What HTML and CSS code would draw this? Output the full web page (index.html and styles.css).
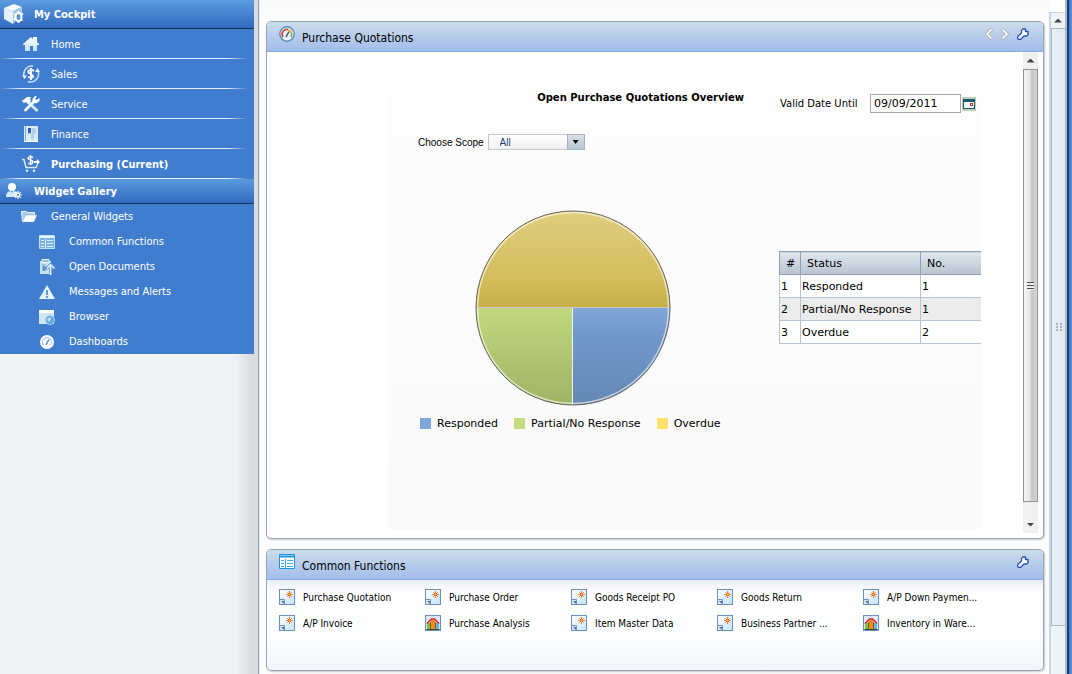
FILE: index.html
```html
<!DOCTYPE html>
<html lang="en">
<head>
    <meta charset="UTF-8">
    <meta name="viewport" content="width=device-width, initial-scale=1.0">
    <title>My Cockpit - Purchasing</title>
    <link rel="stylesheet" href="styles.css">
</head>
<body>
    <!-- shared icons -->
    <svg class="sprite" aria-hidden="true">
        <defs>
            <linearGradient id="pale" x1="0" y1="0" x2="0" y2="1">
                <stop offset="0" stop-color="#ffffff"/>
                <stop offset="1" stop-color="#bfe0f0"/>
            </linearGradient>
            <linearGradient id="paper" x1="0" y1="0" x2="1" y2="1">
                <stop offset="0" stop-color="#ffffff"/>
                <stop offset="1" stop-color="#c3e4f8"/>
            </linearGradient>
        </defs>
        <symbol id="new-doc" viewBox="0 0 16 16">
            <rect x="0.5" y="0.5" width="15" height="15" fill="url(#paper)" stroke="#6d8fbd"/>
            <path d="M0.5 10.5h5v5h-5z" fill="#dbe6f4" stroke="#6d8fbd"/>
            <path d="M2 12h3v3z" fill="#4f77ae"/>
            <path d="M10.500 2v7M7 5.500h7" stroke="#f08030"/>
            <path d="M8.500 3.500l4 4M12.500 3.500l-4 4" stroke="#e8541c"/>
            <circle cx="10.500" cy="5.500" r="1" fill="#ffc04a"/>
        </symbol>
        <symbol id="report" viewBox="0 0 16 16">
            <rect x="0.5" y="0.5" width="15" height="15" fill="#dcebf7" stroke="#6d8fbd"/>
            <path d="M2 8h4v6H2z" fill="#7cc142"/>
            <path d="M6 5h4v9H6z" fill="#f58a1f"/>
            <path d="M10 8h4v6h-4z" fill="#5bb8e8"/>
            <path d="M5.500 7v7M10.500 7v7" stroke="#8c5a14"/>
            <path d="M2 8.500L6.500 4h3L14 8.500" fill="none" stroke="#d8202c" stroke-width="1.500"/>
            <path d="M1.500 14.500h13" stroke="#2d4f2a"/>
        </symbol>
        <symbol id="wrench" viewBox="0 0 12 12">
            <path d="M4.500 2.500L6 1h2.500v2.500H11v3L9.500 8H7l-3.500 3.500H1.500L.7 10.500v-2L4.500 5z" fill="#fff" stroke="#2650b4" stroke-width="1.300" stroke-linejoin="round"/>
            <path d="M2.500 9.700l3-3" stroke="#c6d7f0"/>
        </symbol>
    </svg>

    <div class="app">
        <nav class="sidebar">
            <h2 class="nav-title">
                <svg width="22" height="22" viewBox="0 0 22 22">
                    <path d="M1 5l10-4 8 3-9 4z" fill="#fff"/>
                    <path d="M1 5l9 3v13l-9-5z" fill="#e2f1fa"/>
                    <path d="M10 8l9-4v8l-9 9z" fill="#a4cce9"/>
                    <path d="M15.500 8v2M15.500 17.500v2.500M11 16.500l2-1M18 12l2-1.500M11.500 11l1.500 1.500M18 16l1.500 1.500" stroke="#fff" stroke-width="2"/>
                    <ellipse cx="15.500" cy="14" rx="3" ry="4" fill="#5d9bd8" stroke="#fff" stroke-width="2"/>
                </svg>
                My Cockpit
            </h2>
            <ul class="nav-list">
                <li><a href="#home">
                    <svg width="18" height="18" viewBox="0 0 18 18"><path d="M1 9l8-7 2 2V2h4v5l2 2v1h-2v6h-4v-5H8v5H3v-6H1z" fill="url(#pale)"/></svg>
                    Home</a></li>
                <li><a href="#sales">
                    <svg width="18" height="18" viewBox="0 0 18 18">
                        <path d="M11 1.200A8 8 0 0 0 2 11M6 16.500A8 8 0 0 0 16 6" fill="none" stroke="#c9e4f5" stroke-width="1.500"/>
                        <path d="M0 10.500h5l-2.500 3.500zM13 7l2.500-4L18 7z" fill="#e8f5fc"/>
                        <path d="M12 6Q9 4 7 5.500T8.500 9T11 12T6 12M9 3v12" fill="none" stroke="#fff" stroke-width="1.800"/>
                    </svg>
                    Sales</a></li>
                <li><a href="#service">
                    <svg width="18" height="18" viewBox="0 0 18 18">
                        <path d="M5 6l10.500 10" stroke="#cfe8f6" stroke-width="3"/>
                        <path d="M0 6l5-4h4L8 4l1 2-3 3-2-2-2 1z" fill="#fff"/>
                        <path d="M3.500 15l9-9" stroke="#eef8fd" stroke-width="3" stroke-linecap="round"/>
                        <path d="M13 1l-2.500 3V7l3.500 1.500L17.500 6V3l-3 2L13 4l2-2.500z" fill="#fff"/>
                    </svg>
                    Service</a></li>
                <li><a href="#finance">
                    <svg width="18" height="18" viewBox="0 0 18 18">
                        <path d="M2 1h14v16H2z" fill="#d8ebf7"/>
                        <path d="M3.500 1v16" stroke="#7eacd9"/>
                        <path d="M6 3h3v6L7.500 7.500 6 9z" fill="#2b62b5"/>
                        <path d="M9 9h3v5H9zM10 3h4v6h-4z" fill="#b0d2eb"/>
                        <path d="M2 16.500h14" stroke="#fff"/>
                    </svg>
                    Finance</a></li>
                <li><a href="#purchasing" class="current">
                    <svg width="18" height="18" viewBox="0 0 18 18">
                        <path d="M0 4.500h2l2 8h10l1.500-3" fill="none" stroke="#d5ecf8" stroke-width="1.500"/>
                        <path d="M11 2.500Q8 1 6.500 2.500T8.500 5T10.500 8T6 8M8.500 0v10" fill="none" stroke="#fff" stroke-width="1.500"/>
                        <path d="M12 7h4" stroke="#fff" stroke-width="2"/>
                        <path d="M15 4l3 3-3 3z" fill="#fff"/>
                        <circle cx="5" cy="15.800" r="1.200" fill="#e6f4fb"/>
                        <circle cx="12" cy="15.800" r="1.200" fill="#e6f4fb"/>
                    </svg>
                    Purchasing (Current)</a></li>
            </ul>
            <h2 class="nav-title gallery">
                <svg width="22" height="18" viewBox="0 0 22 18">
                    <circle cx="9" cy="5" r="4" fill="#fff"/>
                    <path d="M3 15q0-6 5-6l1 2 1-2q4 0 5 2v4z" fill="#d2eaf7"/>
                    <path d="M15 9v8M11 13h8M12.200 10.200l5.600 5.600M12.200 15.800l5.600-5.600" stroke="#fff" stroke-width="1.200"/>
                    <circle cx="15" cy="13" r="1.800" fill="#6fa3dc" stroke="#fff"/>
                </svg>
                Widget Gallery
            </h2>
            <ul class="tree">
                <li><a href="#general" class="folder">
                    <svg width="16" height="16" viewBox="0 0 16 16"><path d="M0.500 2.500h5l1 1h7v3H5L1.500 13z" fill="#a9cbee" stroke="#eef6fc"/><path d="M5 6h11l-3 7H1z" fill="#fff" stroke="#7ba6dc" stroke-width="0.500"/></svg>
                    General Widgets</a>
                    <ul>
                        <li><a href="#common">
                            <svg width="16" height="16" viewBox="0 0 16 16"><path d="M0.500 1.500h15v13h-15z" fill="#7eb1e5" stroke="#bfe0f5"/><path d="M1 3h14" stroke="#e6f5fc" stroke-width="2"/><path d="M2 6.500h3M8 6.500h6M2 9.500h3M8 9.500h6M2 12.500h3M8 12.500h6M6.500 5v9" stroke="#d8eefa"/></svg>
                            Common Functions</a></li>
                        <li><a href="#documents">
                            <svg width="16" height="16" viewBox="0 0 16 16"><path d="M1 2h11v13H1z" fill="#c8e2f5"/><path d="M3 0.500h7v3H3z" fill="#8fbbe5" stroke="#eaf6fd"/><path d="M3 6h4M3 8h3" stroke="#6ca1dc"/><path d="M5 12V9h4M11.500 16V7M8 9.500l3.500-4 4 4" fill="none" stroke="#5c95d8" stroke-width="3"/><path d="M11.500 16V7M8 9.500l3.500-4 4 4" fill="none" stroke="#e6f4fc" stroke-width="1.500"/></svg>
                            Open Documents</a></li>
                        <li><a href="#messages">
                            <svg width="16" height="16" viewBox="0 0 16 16"><path d="M8 1l8 14H0z" fill="#e4f4fc"/><path d="M8 6v5M8 12v2" stroke="#5f99da" stroke-width="2"/></svg>
                            Messages and Alerts</a></li>
                        <li><a href="#browser">
                            <svg width="16" height="16" viewBox="0 0 16 16"><path d="M0 1h15v14H0z" fill="#cde7f7"/><path d="M0 2.500h15" stroke="#fff" stroke-width="3"/><circle cx="11" cy="11" r="4.500" fill="#6ba5df" stroke="#a9d2f0"/><path d="M8 10l3-2 1 2-2 3zM13 11l1 2" fill="#c2e0f4"/></svg>
                            Browser</a></li>
                        <li><a href="#dashboards">
                            <svg width="16" height="16" viewBox="0 0 16 16"><circle cx="8" cy="8" r="7" fill="#fff"/><path d="M4.500 11A4.500 4.500 0 1 1 11.500 11" fill="none" stroke="#a9c9ea" stroke-width="1.200"/><path d="M7 11l3-5.500" stroke="#5c90d6" stroke-width="1.500"/></svg>
                            Dashboards</a></li>
                    </ul>
                </li>
            </ul>
        </nav>
        <div class="splitter"></div>

        <main class="workspace">
            <section class="widget quotations">
                <header class="widget-head">
                    <svg width="16" height="16" viewBox="0 0 16 16">
                        <circle cx="8" cy="8" r="7.200" fill="#e4f4fb" stroke="#5b8bbd" stroke-width="1.400"/>
                        <path d="M4 11A4.800 4.800 0 0 1 9 3.500" fill="none" stroke="#e2413a" stroke-width="1.600"/>
                        <path d="M9 3.500A4.800 4.800 0 0 1 12.500 7" fill="none" stroke="#f2a12c" stroke-width="1.600"/>
                        <path d="M12.500 7A5 5 0 0 1 12 11" fill="none" stroke="#5cb53c" stroke-width="1.600"/>
                        <path d="M7 11L10 5.500" stroke="#444c58" stroke-width="1.500"/>
                    </svg>
                    <h3>Purchase Quotations</h3>
                    <div class="tools">
                        <button type="button" aria-label="Previous"><svg width="8" height="12" viewBox="0 0 8 12"><path d="M7 1L2 6l5 5" fill="none" stroke="#b4b4b0" stroke-width="3.500"/><path d="M6.500 1.500L2 6l4.500 4.500" fill="none" stroke="#fff" stroke-width="1.600"/></svg></button>
                        <button type="button" aria-label="Next"><svg width="8" height="12" viewBox="0 0 8 12"><path d="M1 1l5 5-5 5" fill="none" stroke="#b4b4b0" stroke-width="3.500"/><path d="M1.500 1.500L6 6l-4.500 4.500" fill="none" stroke="#fff" stroke-width="1.600"/></svg></button>
                        <button type="button" aria-label="Settings"><svg width="12" height="12"><use href="#wrench"/></svg></button>
                    </div>
                </header>
                <div class="widget-body">
                    <div class="dashboard">
                        <div class="top-row">
                            <h4>Open Purchase Quotations Overview</h4>
                            <div class="date-field">
                                <label for="validDate">Valid Date Until</label>
                                <input type="text" id="validDate" value="09/09/2011">
                                <button type="button" aria-label="Pick date"><svg width="14" height="14" viewBox="0 0 14 14"><path d="M0 0h14v14H0z" fill="#b7d2b8"/><path d="M1 2h12v10H1z" fill="#20566e"/><path d="M2 5h10v6H2z" fill="#f2f4f3"/><path d="M8 6h3v3H8z" fill="#b5392c"/><path d="M9 7h1v1H9z" fill="#fff"/></svg></button>
                            </div>
                        </div>
                        <div class="scope-row">
                            <label for="scope">Choose Scope</label>
                            <div class="select-box">
                                <select id="scope"><option>All</option></select>
                                <span class="arrow"></span>
                            </div>
                        </div>
                        <div class="overview">
                            <figure class="chart">
                                <svg width="196" height="196" viewBox="0 0 196 196" role="img" aria-label="Quotations by status">
                                    <defs>
                                        <linearGradient id="gold" x1="0" y1="0" x2="0" y2="1"><stop offset="0" stop-color="#dfce80"/><stop offset="0.700" stop-color="#d4bd5b"/><stop offset="1" stop-color="#c6ae48"/></linearGradient>
                                        <linearGradient id="green" x1="0" y1="0" x2="0" y2="1"><stop offset="0" stop-color="#c0d880"/><stop offset="1" stop-color="#9fb365"/></linearGradient>
                                        <linearGradient id="blue" x1="0" y1="0" x2="0" y2="1"><stop offset="0" stop-color="#82a6d8"/><stop offset="0.250" stop-color="#7399cc"/><stop offset="1" stop-color="#6487b4"/></linearGradient>
                                    </defs>
                                    <path d="M1 98a97 97 0 0 1 194 0z" fill="url(#gold)"/>
                                    <path d="M98 98v97A97 97 0 0 1 1 98z" fill="url(#green)"/>
                                    <path d="M98 98h97a97 97 0 0 1-97 97z" fill="url(#blue)"/>
                                    <circle cx="98" cy="98" r="95.500" fill="none" stroke="#fff" stroke-opacity="0.600" stroke-width="1.500"/>
                                    <path d="M1 97.500h194" stroke="#d2cac6"/>
                                    <path d="M97.500 98v97" stroke="#f0f4e4"/>
                                    <circle cx="98" cy="98" r="97" fill="none" stroke="#68665a"/>
                                </svg>
                                <figcaption>
                                    <span class="key responded">Responded</span>
                                    <span class="key partial">Partial/No Response</span>
                                    <span class="key overdue">Overdue</span>
                                </figcaption>
                            </figure>
                            <table class="status-table">
                                <thead>
                                    <tr><th class="num">#</th><th class="status">Status</th><th>No.</th></tr>
                                </thead>
                                <tbody>
                                    <tr><td>1</td><td>Responded</td><td>1</td></tr>
                                    <tr><td>2</td><td>Partial/No Response</td><td>1</td></tr>
                                    <tr><td>3</td><td>Overdue</td><td>2</td></tr>
                                </tbody>
                            </table>
                        </div>
                    </div>
                    <div class="scrollbar inner">
                        <button type="button" class="up" aria-label="Scroll up"></button>
                        <div class="thumb"><span class="grip"></span></div>
                        <button type="button" class="down" aria-label="Scroll down"></button>
                    </div>
                </div>
            </section>

            <section class="widget functions">
                <header class="widget-head">
                    <svg width="16" height="16" viewBox="0 0 16 16"><path d="M0.500 0.500h15v14h-15z" fill="#fff" stroke="#1b95e0"/><path d="M1 2.500h14" stroke="#1b95e0" stroke-width="2"/><path d="M2 6.500h3M8 6.500h6M2 9.500h3M8 9.500h6M2 12.500h3M8 12.500h6M6.500 5v9" stroke="#3aa6e6"/></svg>
                    <h3>Common Functions</h3>
                    <div class="tools">
                        <button type="button" aria-label="Settings"><svg width="12" height="12"><use href="#wrench"/></svg></button>
                    </div>
                </header>
                <div class="function-grid">
                    <a href="#f1"><svg width="16" height="16"><use href="#new-doc"/></svg>Purchase Quotation</a>
                    <a href="#f2"><svg width="16" height="16"><use href="#new-doc"/></svg>Purchase Order</a>
                    <a href="#f3"><svg width="16" height="16"><use href="#new-doc"/></svg>Goods Receipt PO</a>
                    <a href="#f4"><svg width="16" height="16"><use href="#new-doc"/></svg>Goods Return</a>
                    <a href="#f5"><svg width="16" height="16"><use href="#new-doc"/></svg>A/P Down Paymen...</a>
                    <a href="#f6"><svg width="16" height="16"><use href="#new-doc"/></svg>A/P Invoice</a>
                    <a href="#f7"><svg width="16" height="16"><use href="#report"/></svg>Purchase Analysis</a>
                    <a href="#f8"><svg width="16" height="16"><use href="#new-doc"/></svg>Item Master Data</a>
                    <a href="#f9"><svg width="16" height="16"><use href="#new-doc"/></svg>Business Partner ...</a>
                    <a href="#f10"><svg width="16" height="16"><use href="#report"/></svg>Inventory in Ware...</a>
                </div>
            </section>
        </main>

        <div class="scrollbar outer">
            <button type="button" class="up" aria-label="Scroll page up"></button>
            <div class="thumb"><span class="grip"></span></div>
        </div>
        <div class="window-edge"></div>
    </div>
</body>
</html>
```
FILE: styles.css
```css
* {
    box-sizing: border-box;
}
body {
    margin: 0;
    font-family: "DejaVu Sans", sans-serif;
    font-size: 11px;
    color: #000;
    background: #fff;
}
h2, h3, h4, ul, figure {
    margin: 0;
    padding: 0;
}
ul {
    list-style: none;
}
a {
    color: inherit;
    text-decoration: none;
}
button {
    padding: 0;
    border: none;
    background: none;
    cursor: pointer;
}
svg {
    display: block;
    flex: none;
}
.sprite {
    position: absolute;
    width: 0;
    height: 0;
}
.app {
    display: flex;
    min-height: 100vh;
}

/* sidebar */
.sidebar {
    width: 254px;
    flex: none;
    background: linear-gradient(to right, #eef2f5 236px, #d6dade);
    color: #fff;
    font-family: "DejaVu Sans Condensed", "DejaVu Sans", sans-serif;
}
.nav-title {
    display: flex;
    align-items: center;
    gap: 9px;
    height: 29px;
    padding-left: 3px;
    font-size: 11px;
    background: linear-gradient(#5a9be0, #3169bf);
    border-bottom: 1px solid #1c2f58;
}
.nav-title.gallery {
    height: 25px;
}
.nav-list {
    background: #417dcf;
}
.nav-list a {
    display: flex;
    align-items: center;
    gap: 11px;
    height: 30px;
    padding-left: 22px;
    background: linear-gradient(to right, transparent, #e4edf8 20px, #e4edf8 228px, transparent 248px) bottom / 100% 1px no-repeat;
}
.nav-list .current {
    font-weight: bold;
}
.tree {
    background: #417dcf;
}
.tree a {
    display: flex;
    align-items: center;
    gap: 14px;
    height: 25px;
    padding-left: 39px;
}
.tree .folder {
    padding-left: 21px;
}
.splitter {
    width: 6px;
    flex: none;
    background: linear-gradient(to right, #d9dde1 4px, #969eae 4px 5px, #eceef2 5px);
}

/* widgets */
.workspace {
    flex: 1;
    min-width: 0;
    display: flex;
    flex-direction: column;
    gap: 10px;
    padding: 21px 5px 3px 6px;
    background: linear-gradient(#f8f9fa, #fdfdfd 20px);
}
.widget {
    display: flex;
    flex-direction: column;
    border: 1px solid #98a4ba;
    border-radius: 5px;
    overflow: hidden;
    background: #fff;
    box-shadow: 1px 1px 2px #c8c8c8;
}
.quotations {
    flex: 1;
}
.functions {
    min-height: 122px;
    background: linear-gradient(#e9edf6 30px, #fff 42px, #fcfdff 90px, #f2f5fb);
}
.widget-head {
    display: flex;
    align-items: center;
    gap: 7px;
    height: 30px;
    padding: 0 14px 5px 12px;
    background: linear-gradient(#cbdcea, #a3bdec);
    border-bottom: 1px solid #85aae6;
}
.widget-head h3 {
    padding-top: 7px;
    font: 12px "DejaVu Sans Condensed", "DejaVu Sans", sans-serif;
}
.tools {
    display: flex;
    gap: 8px;
    margin-left: auto;
}
.widget-body {
    flex: 1;
    display: flex;
    padding: 0 5px 5px 121px;
}

/* quotations dashboard */
.dashboard {
    flex: 1;
    min-width: 0;
    overflow: hidden;
    margin: 20px 42px 4px 0;
    padding-top: 20px;
    background: linear-gradient(#fefefe, #fcfcfc 100px, #fafafa);
}
.top-row {
    display: flex;
    align-items: center;
}
.top-row h4 {
    width: 392px;
    padding: 0 36px 12px 0;
    text-align: right;
    white-space: nowrap;
    font-size: 10px;
}
.date-field {
    display: flex;
    align-items: center;
    font-size: 10px;
    white-space: nowrap;
}
.date-field label {
    width: 90px;
}
.date-field input {
    width: 91px;
    height: 19px;
    margin-right: 1px;
    padding: 0 3px;
    border: 1px solid #a5a5a5;
    font: 11px "DejaVu Sans", sans-serif;
}
.scope-row {
    display: flex;
    align-items: center;
    gap: 4px;
    margin-top: 19px;
    padding-left: 30px;
    font: 10px "Liberation Sans", sans-serif;
}
.select-box {
    display: flex;
    position: relative;
    width: 97px;
}
.select-box select {
    appearance: none;
    width: 100%;
    height: 16px;
    padding: 0 0 0 11px;
    border: 1px solid #c3c7cb;
    border-radius: 0;
    background: linear-gradient(#fff, #f0f0f0);
    font: 10px "Liberation Sans", sans-serif;
    color: #1f3e70;
}
.arrow {
    position: absolute;
    top: 0;
    right: 0;
    width: 18px;
    height: 16px;
    border: 1px solid #a9b3c0;
    background: linear-gradient(#d6dee8, #bac7d5);
    pointer-events: none;
}
.arrow::after {
    content: "";
    display: block;
    margin: 5px auto 0;
    width: 6px;
    height: 4px;
    background: #000;
    clip-path: polygon(0 0, 100% 0, 50% 100%);
}
.overview {
    display: flex;
    align-items: flex-start;
    margin-top: 60px;
}
.chart {
    width: 391px;
    flex: none;
    padding-left: 32px;
}
.chart svg {
    margin-left: 55px;
}
.chart figcaption {
    display: flex;
    gap: 16px;
    margin-top: 11px;
    white-space: nowrap;
}
.key {
    display: flex;
    align-items: center;
    gap: 6px;
}
.key::before {
    content: "";
    width: 11px;
    height: 11px;
    background: #7fa7dc;
}
.partial::before {
    background: #c3dc7e;
}
.overdue::before {
    background: #ffe26b;
}
.status-table {
    flex: 1;
    margin-top: 41px;
    border-collapse: collapse;
    table-layout: fixed;
    background: #fff;
    border: 1px solid #9bb4cc;
    border-right: none;
}
.status-table th, .status-table td {
    height: 23px;
    padding: 0 1px;
    text-align: left;
    white-space: nowrap;
    border: 1px solid #b6c3d3;
    border-right: none;
}
.status-table th {
    padding-left: 6px;
    font-weight: normal;
    background: linear-gradient(#dfe7f0, #b8c3cf);
    border-color: #8e9fb0;
}
.status-table .num {
    width: 21px;
}
.status-table .status {
    width: 120px;
}
.status-table tbody tr:nth-child(even) {
    background: #ececec;
}

/* common functions */
.function-grid {
    display: grid;
    grid-template-columns: repeat(5, minmax(0, 146px));
    grid-auto-rows: 26px;
    padding: 4px 12px;
    font: 10px "DejaVu Sans Condensed", "DejaVu Sans", sans-serif;
}
.function-grid a {
    display: flex;
    align-items: center;
    gap: 8px;
    white-space: nowrap;
}

/* scrollbars */
.scrollbar {
    display: flex;
    flex-direction: column;
    flex: none;
}
.scrollbar button {
    display: flex;
    align-items: center;
    justify-content: center;
    height: 17px;
}
.up::after, .down::after {
    content: "";
    width: 8px;
    height: 4px;
    background: #444;
    clip-path: polygon(50% 0, 100% 100%, 0 100%);
}
.down::after {
    clip-path: polygon(0 0, 100% 0, 50% 100%);
}
.thumb {
    display: flex;
    align-items: center;
    justify-content: center;
    flex: 1;
}
.inner {
    width: 15px;
    background: #f0f0f0;
}
.inner .thumb {
    margin-bottom: 14px;
    border: 1px solid #939393;
    background: linear-gradient(to right, #f5f5f5, #e6e6e6 45%, #c5c5c7 60%, #d5d5d8);
}
.inner .grip {
    width: 7px;
    height: 8px;
    background: repeating-linear-gradient(#4d4d4d 0 1px, #eee 1px 3px);
}
.outer {
    width: 16px;
    margin-top: 12px;
    padding-bottom: 48px;
    background: #eef3f8;
    border-left: 2px solid #c5d8ea;
    border-top: 1px solid #c5d8ea;
}
.outer .up {
    height: 15px;
}
.outer .thumb {
    border: 1px solid #a9b9c8;
    border-right: none;
    background: linear-gradient(to right, #e9f1f8, #dfe9f2);
}
.outer .grip {
    width: 6px;
    height: 8px;
    background: radial-gradient(circle at 1px 1px, #a5b5c5 1px, transparent 1px) 0 0 / 4px 3px;
}
.window-edge {
    width: 7px;
    flex: none;
    background: linear-gradient(to right, #b5b8b8 2px, #163f7e 2px 4px, #3e74c2 4px, #5c93da);
}
```
